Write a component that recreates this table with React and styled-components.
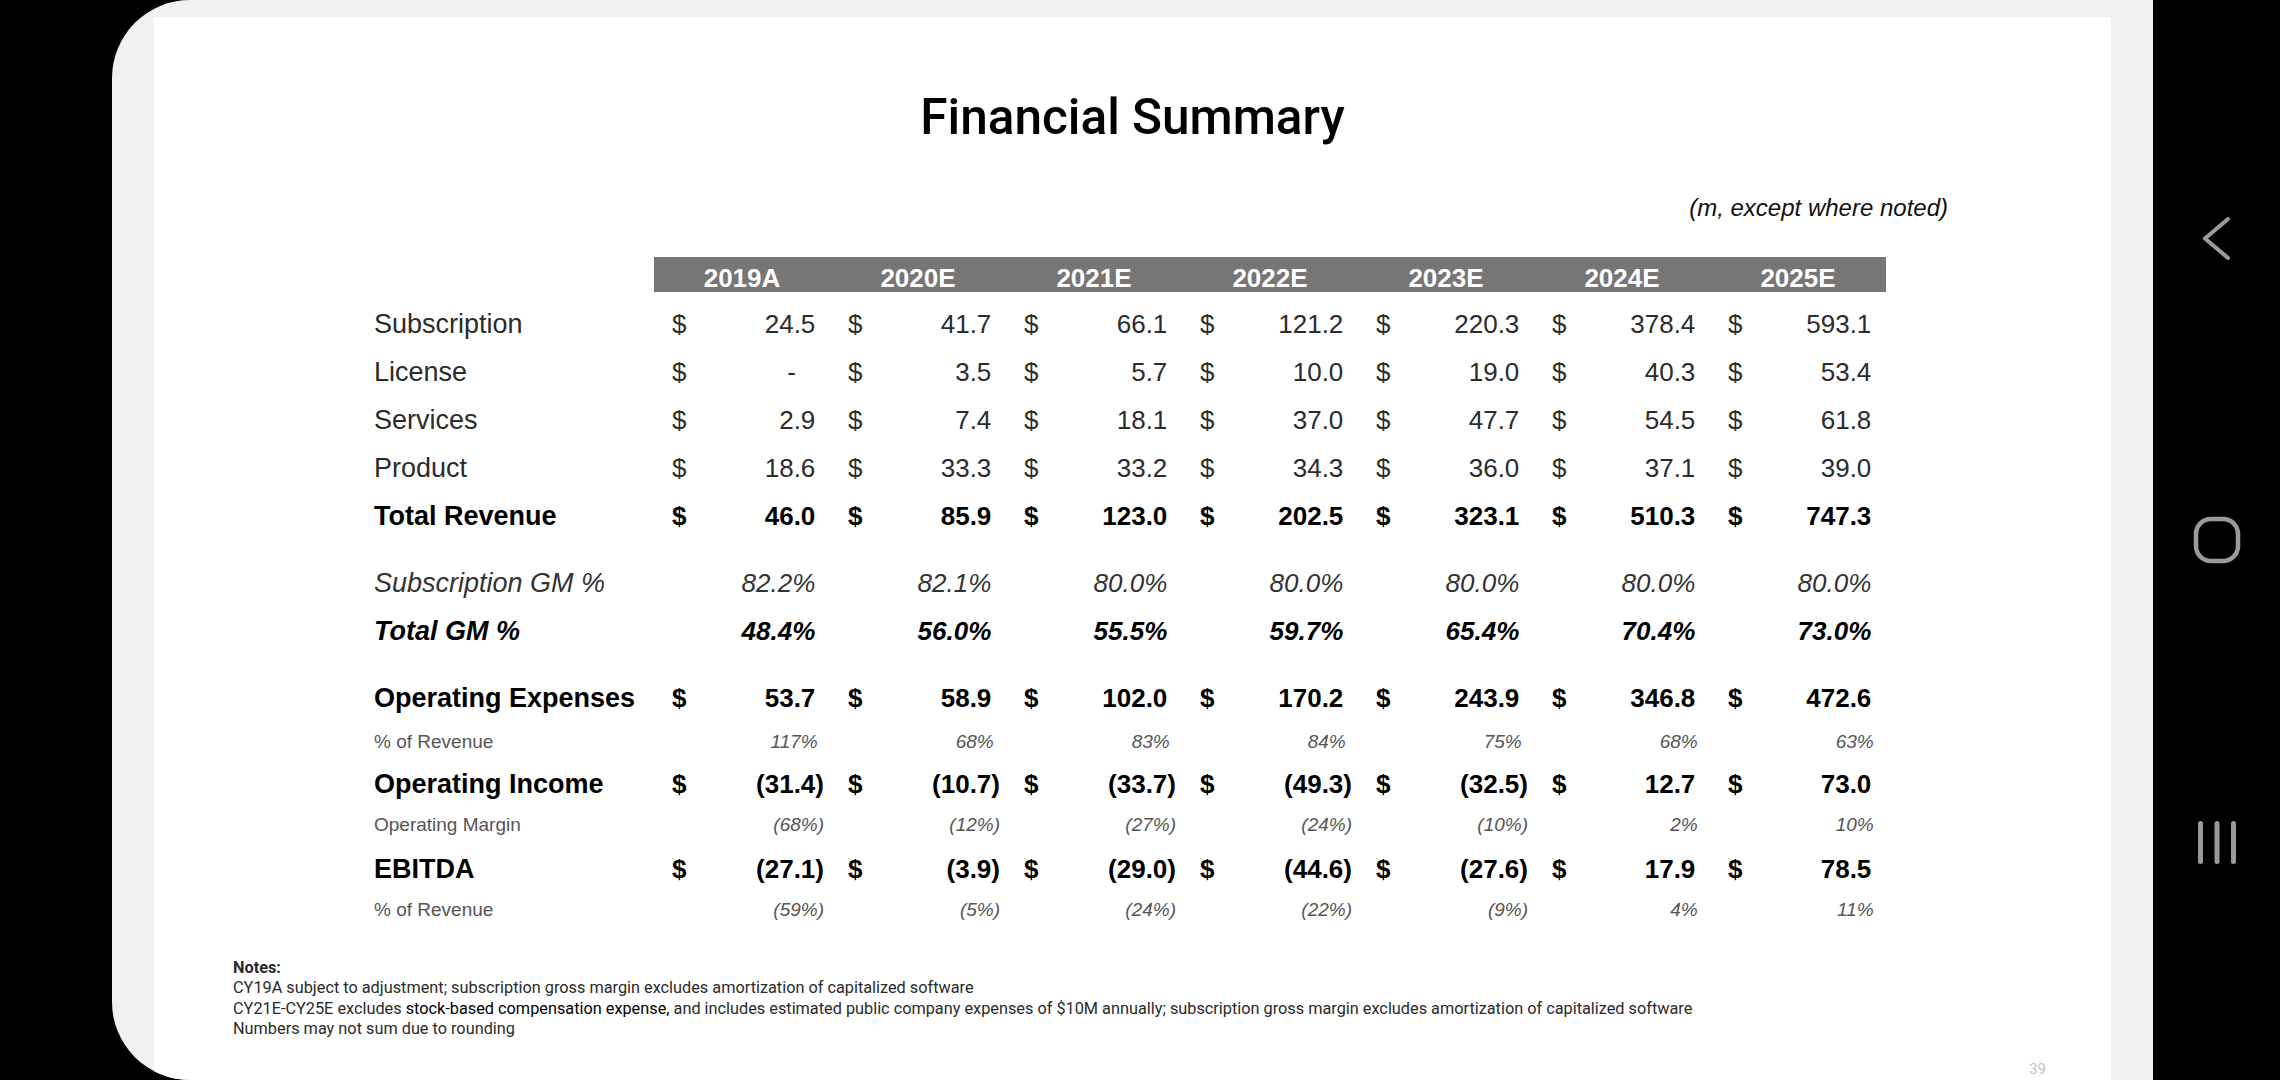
import React from 'react';
import styled, { createGlobalStyle } from 'styled-components';

const GlobalStyle = createGlobalStyle`
  html, body { margin: 0; padding: 0; background: #000; }
  body { width: 2280px; height: 1080px; overflow: hidden; }
  #root { width: 2280px; height: 1080px; }
`;

const Device = styled.div`
  display: flex;
  width: 2280px;
  height: 1080px;
  background: #000;
  overflow: hidden;
`;

const Bezel = styled.div`
  width: 112px;
  flex: none;
  background: #000;
`;

const Screen = styled.main`
  flex: 1;
  display: flex;
  background: #f0f1f3;
  border-radius: 78px 0 0 78px;
  padding: 17px 42px 0;
  overflow: hidden;
`;

const Slide = styled.section`
  flex: 1;
  display: flex;
  flex-direction: column;
  background: #fff;
  padding-top: 70px;
  overflow: hidden;
`;

const Title = styled.h1`
  margin: 0;
  font-family: Roboto, "Liberation Sans", sans-serif;
  font-weight: 500;
  font-size: 49.5px;
  line-height: 60px;
  text-align: center;
  color: #000;
`;

const UnitNote = styled.div`
  align-self: flex-end;
  margin: 47px 163px 0 0;
  font-family: "Liberation Sans", Arial, sans-serif;
  font-style: italic;
  font-size: 24px;
  line-height: 28px;
  color: #111;
`;

const Table = styled.div`
  margin: 35px 0 0 220px;
  display: flex;
  flex-direction: column;
  font-family: "Liberation Sans", Arial, sans-serif;
`;

const HeaderRow = styled.div`
  display: grid;
  grid-template-columns: 280px repeat(7, 176px);
  height: 35px;
  margin-bottom: 8px;
`;

const HeaderBar = styled.div`
  grid-column: 2 / -1;
  display: grid;
  grid-template-columns: repeat(7, 176px);
  background: #767676;
`;

const YearCell = styled.div`
  padding-top: 8px;
  text-align: center;
  color: #fff;
  font-weight: 700;
  font-size: 26px;
  line-height: 27px;
`;

const STYLES = {
  plain: { size: 27, vsize: 26, weight: 400, style: 'normal', color: '#2b2b2b', vcolor: '#2b2b2b' },
  total: { size: 27, vsize: 26, weight: 700, style: 'normal', color: '#000', vcolor: '#000' },
  italic: { size: 27, vsize: 26, weight: 400, style: 'italic', color: '#333', vcolor: '#333' },
  boldItalic: { size: 27, vsize: 26, weight: 700, style: 'italic', color: '#000', vcolor: '#000' },
  minor: { size: 19, vsize: 19, weight: 400, style: 'normal', color: '#555', vcolor: '#555', vstyle: 'italic' },
};

const Row = styled.div`
  display: grid;
  grid-template-columns: 280px repeat(7, 176px);
  align-items: center;
  height: ${(p) => p.$h}px;
`;

const Label = styled.div`
  font-size: ${(p) => STYLES[p.$kind].size}px;
  font-weight: ${(p) => STYLES[p.$kind].weight};
  font-style: ${(p) => STYLES[p.$kind].style};
  color: ${(p) => STYLES[p.$kind].color};
  white-space: nowrap;
`;

const ValueCell = styled.div`
  display: flex;
  justify-content: space-between;
  align-items: baseline;
  padding: 0 6px 0 18px;
  font-size: ${(p) => STYLES[p.$kind].vsize}px;
  font-weight: ${(p) => STYLES[p.$kind].weight};
  font-style: ${(p) => STYLES[p.$kind].vstyle || STYLES[p.$kind].style};
  color: ${(p) => STYLES[p.$kind].vcolor};
  white-space: nowrap;
`;

const Dollar = styled.span`
  font-style: normal;
`;

const Amount = styled.span`
  margin-left: auto;
`;

const Paren = styled.span`
  visibility: ${(p) => (p.$shown ? 'visible' : 'hidden')};
`;

const Dash = styled.span`
  margin-left: auto;
  margin-right: 28px;
`;

const Spacer = styled.div`
  height: ${(p) => p.$h}px;
`;

const Notes = styled.div`
  margin: 32px 0 0 79px;
  font-family: Roboto, "Liberation Sans", sans-serif;
  font-size: 16.3px;
  line-height: 20.3px;
  color: #2a2a2a;
`;

const NoteLine = styled.div`
  white-space: nowrap;
  font-weight: ${(p) => (p.$bold ? 700 : 400)};
`;

const Emph = styled.span`
  color: #000;
`;

const PageNumber = styled.div`
  align-self: flex-end;
  margin: 21px 65px 0 0;
  font-family: Roboto, "Liberation Sans", sans-serif;
  font-size: 15px;
  line-height: 18px;
  color: #c4c4c4;
`;

const NavBar = styled.nav`
  width: 127px;
  flex: none;
  display: flex;
  flex-direction: column;
  align-items: center;
  justify-content: center;
  gap: 254px;
  background: #000;
`;

const NavIcon = styled.svg`
  width: 48px;
  height: 48px;
  display: block;
`;

const YEARS = ['2019A', '2020E', '2021E', '2022E', '2023E', '2024E', '2025E'];

const ROWS = [
  { label: 'Subscription', kind: 'plain', dollar: true, h: 48, values: ['24.5', '41.7', '66.1', '121.2', '220.3', '378.4', '593.1'] },
  { label: 'License', kind: 'plain', dollar: true, h: 48, values: ['-', '3.5', '5.7', '10.0', '19.0', '40.3', '53.4'] },
  { label: 'Services', kind: 'plain', dollar: true, h: 48, values: ['2.9', '7.4', '18.1', '37.0', '47.7', '54.5', '61.8'] },
  { label: 'Product', kind: 'plain', dollar: true, h: 48, values: ['18.6', '33.3', '33.2', '34.3', '36.0', '37.1', '39.0'] },
  { label: 'Total Revenue', kind: 'total', dollar: true, h: 48, values: ['46.0', '85.9', '123.0', '202.5', '323.1', '510.3', '747.3'] },
  { spacer: 19 },
  { label: 'Subscription GM %', kind: 'italic', h: 48, values: ['82.2%', '82.1%', '80.0%', '80.0%', '80.0%', '80.0%', '80.0%'] },
  { label: 'Total GM %', kind: 'boldItalic', h: 48, values: ['48.4%', '56.0%', '55.5%', '59.7%', '65.4%', '70.4%', '73.0%'] },
  { spacer: 19 },
  { label: 'Operating Expenses', kind: 'total', dollar: true, h: 48, values: ['53.7', '58.9', '102.0', '170.2', '243.9', '346.8', '472.6'] },
  { label: '% of Revenue', kind: 'minor', h: 40, values: ['117%', '68%', '83%', '84%', '75%', '68%', '63%'] },
  { label: 'Operating Income', kind: 'total', dollar: true, h: 44, values: ['(31.4)', '(10.7)', '(33.7)', '(49.3)', '(32.5)', '12.7', '73.0'] },
  { label: 'Operating Margin', kind: 'minor', h: 38, values: ['(68%)', '(12%)', '(27%)', '(24%)', '(10%)', '2%', '10%'] },
  { label: 'EBITDA', kind: 'total', dollar: true, h: 50, values: ['(27.1)', '(3.9)', '(29.0)', '(44.6)', '(27.6)', '17.9', '78.5'] },
  { label: '% of Revenue', kind: 'minor', h: 32, values: ['(59%)', '(5%)', '(24%)', '(22%)', '(9%)', '4%', '11%'] },
];

function Value({ v, kind, dollar }) {
  const negative = v.startsWith('(');
  const body = negative ? v.slice(0, -1) : v;
  return (
    <ValueCell $kind={kind}>
      {dollar ? <Dollar>$</Dollar> : <span />}
      {v === '-' ? (
        <Dash>-</Dash>
      ) : (
        <Amount>
          {body}
          <Paren $shown={negative}>)</Paren>
        </Amount>
      )}
    </ValueCell>
  );
}

export default function App() {
  return (
    <>
      <GlobalStyle />
      <Device>
        <Bezel />
        <Screen>
          <Slide>
            <Title>Financial Summary</Title>
            <UnitNote>(m, except where noted)</UnitNote>
            <Table>
              <HeaderRow>
                <div />
                <HeaderBar>
                  {YEARS.map((y) => (
                    <YearCell key={y}>{y}</YearCell>
                  ))}
                </HeaderBar>
              </HeaderRow>
              {ROWS.map((r, i) =>
                r.spacer ? (
                  <Spacer key={i} $h={r.spacer} />
                ) : (
                  <Row key={i} $h={r.h}>
                    <Label $kind={r.kind}>{r.label}</Label>
                    {r.values.map((v, j) => (
                      <Value key={j} v={v} kind={r.kind} dollar={r.dollar} />
                    ))}
                  </Row>
                )
              )}
            </Table>
            <Notes>
              <NoteLine $bold>Notes:</NoteLine>
              <NoteLine>CY19A subject to adjustment; subscription gross margin excludes amortization of capitalized software</NoteLine>
              <NoteLine>
                CY21E-CY25E excludes <Emph>stock-based compensation expense,</Emph> and includes estimated public company expenses of $10M annually; subscription gross margin excludes amortization of capitalized software
              </NoteLine>
              <NoteLine>Numbers may not sum due to rounding</NoteLine>
            </Notes>
            <PageNumber>39</PageNumber>
          </Slide>
        </Screen>
        <NavBar>
          <NavIcon viewBox="0 0 48 48">
            <polyline points="35,5 12,24.5 35,44" fill="none" stroke="#9a9a9a" strokeWidth="4" strokeLinecap="round" strokeLinejoin="round" />
          </NavIcon>
          <NavIcon viewBox="0 0 48 48">
            <rect x="3" y="3" width="42" height="42" rx="15" fill="none" stroke="#9a9a9a" strokeWidth="4.5" />
          </NavIcon>
          <NavIcon viewBox="0 0 48 48">
            <rect x="5" y="3" width="5" height="43" rx="2.5" fill="#9a9a9a" />
            <rect x="21.5" y="3" width="5" height="43" rx="2.5" fill="#9a9a9a" />
            <rect x="38" y="3" width="5" height="43" rx="2.5" fill="#9a9a9a" />
          </NavIcon>
        </NavBar>
      </Device>
    </>
  );
}
